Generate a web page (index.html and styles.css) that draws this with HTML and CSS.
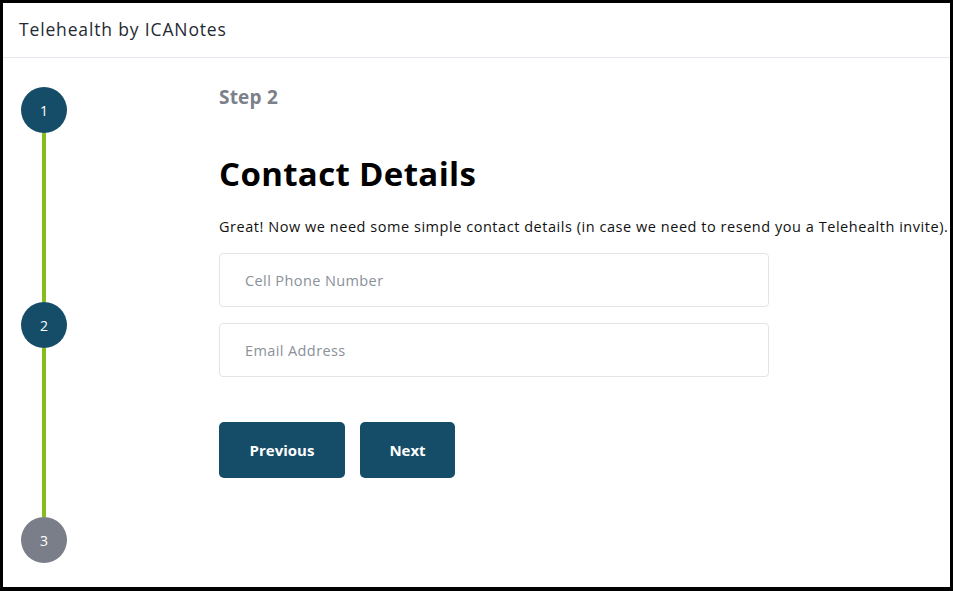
FILE: index.html
```html
<!DOCTYPE html>
<html lang="en">
<head>
<meta charset="utf-8">
<title>Telehealth by ICANotes</title>
<link rel="stylesheet" href="styles.css">
</head>
<body>
<div class="frame">
  <header class="topbar">Telehealth by ICANotes</header>
  <main class="layout">
    <aside class="stepper">
      <div class="step done">1</div>
      <div class="rail"></div>
      <div class="step done">2</div>
      <div class="rail"></div>
      <div class="step todo">3</div>
    </aside>
    <section class="content">
      <div class="step-label">Step 2</div>
      <h1 class="title">Contact Details</h1>
      <p class="lead">Great! Now we need some simple contact details (in case we need to resend you a Telehealth invite).</p>
      <div class="field"><input class="input" type="text" placeholder="Cell Phone Number"></div>
      <div class="field"><input class="input" type="text" placeholder="Email Address"></div>
      <div class="actions">
        <button class="btn btn-prev" type="button">Previous</button>
        <button class="btn btn-next" type="button">Next</button>
      </div>
    </section>
  </main>
</div>
</body>
</html>
```

FILE: styles.css
```css
* { box-sizing: border-box; }
html, body { margin: 0; padding: 0; background: #000; }
body { font-family: "Open Sans", "Liberation Sans", sans-serif; }
.frame {
  width: 953px;
  height: 591px;
  background: #fff;
  border: 3px solid #000;
  border-bottom-width: 4px;
  overflow: hidden;
}
.topbar {
  height: 55px;
  padding: 14px 0 0 16px;
  font-size: 17.5px;
  letter-spacing: 0.85px;
  color: #1f2a33;
  border-bottom: 1px solid #e6e6ee;
}
.layout {
  display: flex;
  padding-left: 18px;
}
.stepper {
  width: 46px;
  padding-top: 29px;
  display: flex;
  flex-direction: column;
  align-items: center;
}
.step {
  width: 46px;
  height: 46px;
  border-radius: 50%;
  color: #fff;
  font-size: 14px;
  display: flex;
  align-items: center;
  justify-content: center;
}
.step.done { background: #154c68; }
.step.todo { background: #7a7e89; }
.rail {
  width: 4px;
  height: 169px;
  background: #85bc1e;
}
.content {
  padding-left: 152px;
  padding-top: 27px;
}
.step-label {
  font-size: 19px;
  font-weight: 700;
  color: #7b8089;
  line-height: 24px;
  letter-spacing: 0.2px;
}
.title {
  margin: 45px 0 0;
  font-size: 33px;
  font-weight: 700;
  line-height: 40px;
  letter-spacing: 0.35px;
  color: #000;
}
.lead {
  margin: 23px 0 0;
  font-size: 14.5px;
  line-height: 20px;
  letter-spacing: 0.54px;
  color: #111;
  white-space: nowrap;
}
.field { margin-top: 16px; }
.field:first-of-type { margin-top: 18px; }
.input {
  display: block;
  width: 550px;
  height: 54px;
  border: 1px solid #e4e4e8;
  border-radius: 4px;
  padding: 0 25px;
  font-family: inherit;
  font-size: 14.5px;
  letter-spacing: 0.4px;
  color: #333;
  background: #fff;
}
.input::placeholder { color: #8b9099; }
.actions {
  display: flex;
  gap: 15px;
  margin-top: 45px;
}
.btn {
  height: 56px;
  border: none;
  border-radius: 5px;
  background: #154c68;
  color: #fff;
  font-family: inherit;
  font-size: 15px;
  font-weight: 700;
}
.btn-prev { width: 126px; }
.btn-next { width: 95px; }
```
